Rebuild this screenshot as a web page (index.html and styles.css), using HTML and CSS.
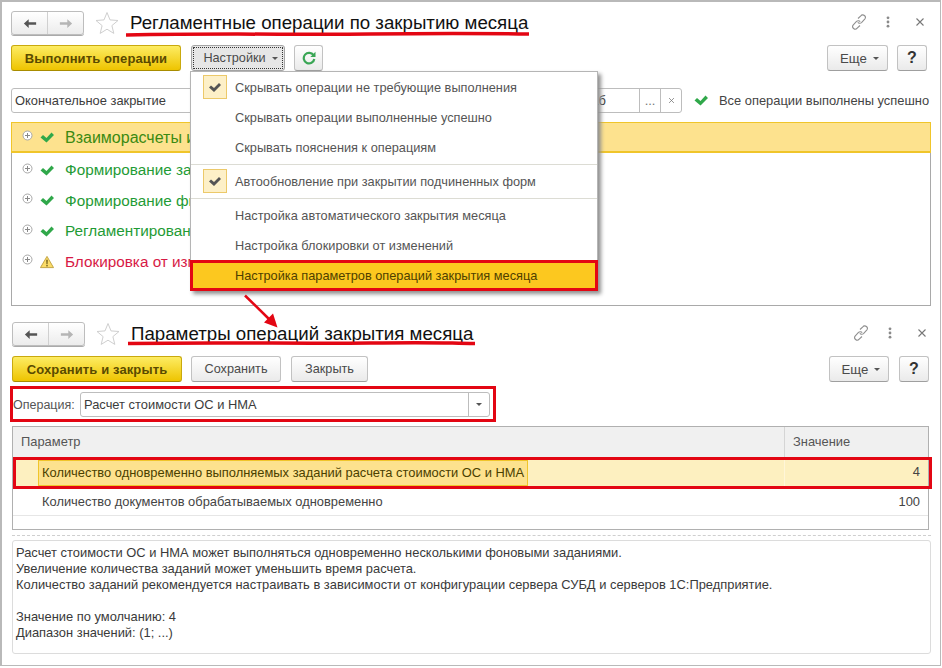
FILE: index.html
```html
<!DOCTYPE html>
<html lang="ru">
<head>
<meta charset="utf-8">
<title>Регламентные операции</title>
<link rel="stylesheet" href="styles.css">
</head>
<body>
<svg class="defs" width="0" height="0">
  <symbol id="i-back" viewBox="0 0 16 12"><path d="M1 6 6.500 1v3.500H15v3H6.500V11z"/></symbol>
  <symbol id="i-fwd" viewBox="0 0 16 12"><path d="M15 6 9.500 1v3.500H1v3h8.500V11z"/></symbol>
  <symbol id="i-star" viewBox="0 0 24 24"><path d="M12 1.500l3 7.400 8 .6-6.100 5.100 1.900 7.800L12 18.200l-6.800 4.200 1.900-7.800L1 9.500l8-.6z" fill="#fff" stroke="#cfcfcf"/></symbol>
  <symbol id="i-link" viewBox="0 0 16 16"><g fill="none" stroke="#8f8f8f" stroke-width="1.100"><path d="M7 4.500 9.800 1.800a2.500 2.500 0 0 1 3.900 3.300L10.500 8.600a2.500 2.500 0 0 1-3.700-.3"/><path d="M9 11.500 6.200 14.200a2.500 2.500 0 0 1-3.900-3.300L5.500 7.400a2.500 2.500 0 0 1 3.700.3"/></g></symbol>
  <symbol id="i-dots" viewBox="0 0 4 12"><g fill="#8a8a8a"><circle cx="2" cy="1.800" r="1.400"/><circle cx="2" cy="6" r="1.400"/><circle cx="2" cy="10.200" r="1.400"/></g></symbol>
  <symbol id="i-x" viewBox="0 0 10 10"><path d="M1.500 1.500l7 7M8.500 1.500l-7 7" stroke="#777" stroke-width="1.100" fill="none"/></symbol>
  <symbol id="i-check" viewBox="0 0 14 11"><path d="M.5 5.500 3 3l3.500 3L11.500 .5 14 3 6.500 10.500z" fill="#30a84a"/></symbol>
  <symbol id="i-mark" viewBox="0 0 14 11"><path d="M1 5.500 3 3.500l3 2.500L11 1l2 2-7 7z" fill="#555"/></symbol>
  <symbol id="i-plus" viewBox="0 0 11 11"><circle cx="5.500" cy="5.500" r="4.500" fill="#fff" stroke="#a8a8a8"/><path d="M3 5.500h5M5.500 3v5" stroke="#888"/></symbol>
  <symbol id="i-warn" viewBox="0 0 15 14"><path d="M7.500 1 14.500 13H.5z" fill="#fbdc68" stroke="#bfa040"/><path d="M6.800 4.500h1.400l-.2 5H7z" fill="#5a4a10"/><rect x="6.800" y="10.300" width="1.400" height="1.400" fill="#5a4a10"/></symbol>
  <symbol id="i-refresh" viewBox="0 0 14 14"><path d="M11.500 4.200A5.300 5.300 0 1 0 12.300 8" fill="none" stroke="#3aa655" stroke-width="2.200"/><path d="M13.500 .8v5.200H8.300z" fill="#3aa655"/></symbol>
</svg>

<main class="page">
  <section class="form form-top">
    <header class="head">
      <div class="nav">
        <button class="nav-btn"><svg class="nav-ico dark"><use href="#i-back"/></svg></button>
        <button class="nav-btn"><svg class="nav-ico light"><use href="#i-fwd"/></svg></button>
      </div>
      <svg class="star"><use href="#i-star"/></svg>
      <h1 class="title">Регламентные операции по закрытию месяца</h1>
      <div class="win-tools">
        <svg class="ico-link"><use href="#i-link"/></svg>
        <svg class="ico-dots"><use href="#i-dots"/></svg>
        <svg class="ico-x"><use href="#i-x"/></svg>
      </div>
    </header>
    <div class="toolbar">
      <button class="btn primary run">Выполнить операции</button>
      <button class="btn open">Настройки<i class="caret"></i></button>
      <button class="btn refresh"><svg class="ico-refresh"><use href="#i-refresh"/></svg></button>
      <button class="btn more more-top">Еще<i class="caret"></i></button>
      <button class="btn help">?</button>
    </div>
    <div class="filter">
      <div class="input wide">
        <span class="val">Окончательное закрытие</span>
        <span class="val tail">аб</span>
        <span class="addon">...</span>
        <span class="addon"><svg class="ico-small-x"><use href="#i-x"/></svg></span>
      </div>
      <svg class="ico-check status-ico"><use href="#i-check"/></svg>
      <span class="status">Все операции выполнены успешно</span>
    </div>
    <div class="list">
      <div class="row current big"><svg class="ico-plus"><use href="#i-plus"/></svg><svg class="ico-check"><use href="#i-check"/></svg><span class="ok">Взаиморасчеты и расчеты</span></div>
      <div class="row"><svg class="ico-plus"><use href="#i-plus"/></svg><svg class="ico-check"><use href="#i-check"/></svg><span class="ok">Формирование записей</span></div>
      <div class="row"><svg class="ico-plus"><use href="#i-plus"/></svg><svg class="ico-check"><use href="#i-check"/></svg><span class="ok">Формирование финансового результата</span></div>
      <div class="row"><svg class="ico-plus"><use href="#i-plus"/></svg><svg class="ico-check"><use href="#i-check"/></svg><span class="ok">Регламентированные операции</span></div>
      <div class="row"><svg class="ico-plus"><use href="#i-plus"/></svg><svg class="ico-warn"><use href="#i-warn"/></svg><span class="bad">Блокировка от изменений</span></div>
    </div>
  </section>

  <section class="form form-bottom">
    <header class="head">
      <div class="nav">
        <button class="nav-btn"><svg class="nav-ico dark"><use href="#i-back"/></svg></button>
        <button class="nav-btn"><svg class="nav-ico light"><use href="#i-fwd"/></svg></button>
      </div>
      <svg class="star"><use href="#i-star"/></svg>
      <h1 class="title">Параметры операций закрытия месяца</h1>
      <div class="win-tools">
        <svg class="ico-link"><use href="#i-link"/></svg>
        <svg class="ico-dots"><use href="#i-dots"/></svg>
        <svg class="ico-x"><use href="#i-x"/></svg>
      </div>
    </header>
    <div class="toolbar">
      <button class="btn primary save-close">Сохранить и закрыть</button>
      <button class="btn save">Сохранить</button>
      <button class="btn close">Закрыть</button>
      <button class="btn more more-bottom">Еще<i class="caret"></i></button>
      <button class="btn help">?</button>
    </div>
    <div class="op-row">
      <label class="op-label">Операция:</label>
      <div class="input combo"><span class="val">Расчет стоимости ОС и НМА</span><span class="addon drop"><i class="caret"></i></span></div>
    </div>
    <div class="table">
      <div class="thead"><div class="col-a">Параметр</div><div class="col-b">Значение</div></div>
      <div class="trow selected"><div class="col-a"><span class="cell-active">Количество одновременно выполняемых заданий расчета стоимости ОС и НМА</span></div><div class="col-b num">4</div></div>
      <div class="trow"><div class="col-a"><span class="cell-plain">Количество документов обрабатываемых одновременно</span></div><div class="col-b num">100</div></div>
    </div>
    <div class="splitter"></div>
    <div class="note">
      <p>Расчет стоимости ОС и НМА может выполняться одновременно несколькими фоновыми заданиями.</p>
      <p>Увеличение количества заданий может уменьшить время расчета.</p>
      <p>Количество заданий рекомендуется настраивать в зависимости от конфигурации сервера СУБД и серверов 1С:Предприятие.</p>
      <p class="gap">Значение по умолчанию: 4</p>
      <p>Диапазон значений: (1; ...)</p>
    </div>
  </section>

  <div class="menu">
    <div class="mi"><span class="tick"><svg class="ico-mark"><use href="#i-mark"/></svg></span>Скрывать операции не требующие выполнения</div>
    <div class="mi">Скрывать операции выполненные успешно</div>
    <div class="mi">Скрывать пояснения к операциям</div>
    <div class="msep"></div>
    <div class="mi"><span class="tick"><svg class="ico-mark"><use href="#i-mark"/></svg></span>Автообновление при закрытии подчиненных форм</div>
    <div class="msep"></div>
    <div class="mi">Настройка автоматического закрытия месяца</div>
    <div class="mi">Настройка блокировки от изменений</div>
    <div class="mi hot">Настройка параметров операций закрытия месяца</div>
  </div>

  <div class="mark mark-op"></div>
  <div class="mark mark-row"></div>
  <svg class="annot" width="942" height="668" viewBox="0 0 942 668">
    <path d="M126 35C230 33 300 35 370 34S470 33 529 34" fill="none" stroke="#e30613" stroke-width="3.500"/>
    <path d="M128 343.500C230 342 300 344 370 343S440 343 475 343.500" fill="none" stroke="#e30613" stroke-width="3.500"/>
    <path d="M245 295.500 271 321" fill="none" stroke="#e30613" stroke-width="2.500"/>
    <path d="M277.500 327.500 264 322.500 273 313.500z" fill="#e30613"/>
  </svg>
</main>
</body>
</html>
```
FILE: styles.css
```css
* { box-sizing: border-box; }
html, body { margin: 0; padding: 0; background: #fff; }
body { font-family: "Liberation Sans", Arial, sans-serif; font-size: 12.9px; color: #4a4a4a; }
.defs { position: absolute; }

.page {
  position: relative;
  width: 941px;
  height: 666px;
  border: 1px solid #b9b9b9;
  border-left-width: 2px;
  border-top-width: 2px;
  overflow: hidden;
}
.form { display: flex; flex-direction: column; }
.form-top { height: 304px; padding: 9px 8px 0 9px; }
.form-bottom { padding: 16px 8px 0 10px; }

.head { display: flex; align-items: center; height: 24px; }
.nav {
  display: flex;
  width: 73px;
  height: 24px;
  border: 1px solid #bdbdbd;
  border-radius: 3px;
  background: linear-gradient(#fff, #ececec);
  box-shadow: 0 1px 0 #aaa;
}
.nav-btn { flex: 1; border: 0; background: none; padding: 0; display: flex; align-items: center; justify-content: center; }
.nav-btn + .nav-btn { border-left: 1px solid #d0d0d0; }
.nav-ico { width: 14px; height: 11px; }
.dark { fill: #555; }
.light { fill: #b5b5b5; }
.star { width: 24px; height: 24px; margin-left: 11px; }
.title { margin: 0 0 0 11px; font-size: 18.700px; font-weight: 400; color: #111; line-height: 24px; white-space: nowrap; }
.win-tools { margin-left: auto; display: flex; align-items: center; height: 24px; padding-bottom: 2px; }
.ico-link { width: 16px; height: 16px; margin-right: 19px; }
.ico-dots { width: 4px; height: 12px; margin-right: 25px; }
.ico-x { width: 10px; height: 10px; margin-right: 7px; }
.form-bottom .ico-x { margin-right: 5px; }

.toolbar { display: flex; align-items: stretch; height: 26px; margin-top: 10px; }
.btn {
  border: 1px solid #c2c2c2;
  border-bottom-color: #9f9f9f;
  border-radius: 3px;
  background: linear-gradient(#fff, #eaeaea);
  font: 12.700px "Liberation Sans", Arial, sans-serif;
  color: #4a4a4a;
  padding: 0;
  display: flex;
  align-items: center;
  justify-content: center;
}
.primary {
  border-color: #c9a90e;
  border-bottom-color: #a88c00;
  background: linear-gradient(#fdec63, #eec400);
  font-weight: 700;
  font-size: 13px;
  letter-spacing: .12px;
  color: #5a4a00;
}
.run, .save-close { width: 170px; }
.open {
  width: 94px;
  margin-left: 10px;
  padding-left: 5px;
  background: #e6e6e6;
  border-color: #a5a5a5;
  outline: 1px dotted #333;
  outline-offset: -3px;
}
.refresh { width: 29px; margin-left: 9px; }
.ico-refresh { width: 14px; height: 14px; }
.more { padding-left: 4px; font-size: 13.200px; }
.more-top { margin-left: auto; width: 61px; }
.more-bottom { margin-left: auto; width: 60px; }
.help { width: 30px; margin-left: 9px; margin-right: 5px; font-weight: 700; font-size: 16px; color: #333; }
.form-bottom .help { margin-left: 10px; margin-right: 3px; }
.save { width: 90px; margin-left: 9px; }
.close { width: 77px; margin-left: 10px; }
.caret {
  display: inline-block;
  width: 0;
  height: 0;
  margin-left: 6px;
  border: 3px solid transparent;
  border-top-color: #555;
  border-bottom-width: 0;
}

.filter { display: flex; align-items: center; height: 25px; margin-top: 17px; }
.input {
  display: flex;
  align-items: center;
  height: 25px;
  border: 1px solid #bdbdbd;
  border-radius: 3px;
  background: #fff;
  color: #3c3c3c;
}
.wide { width: 671px; }
.val { padding-left: 3px; white-space: nowrap; }
.tail { margin-left: auto; padding-right: 33px; }
.addon {
  width: 21px;
  height: 100%;
  border-left: 1px solid #bdbdbd;
  display: flex;
  align-items: center;
  justify-content: center;
  color: #777;
}
.ico-small-x { width: 7px; height: 7px; }
.ico-check { width: 14px; height: 11px; }
.status-ico { margin-left: 12px; }
.status { margin-left: 11px; white-space: nowrap; color: #444; }

.list {
  margin-top: 9px;
  height: 184px;
  width: 920px;
  border: 1px solid #a9a9a9;
  border-top: 0;
}
.row {
  display: flex;
  align-items: center;
  height: 30.500px;
  padding-left: 10px;
  font-size: 15.300px;
  white-space: nowrap;
  overflow: hidden;
}
.current {
  height: 31px;
  margin: 0 -1px 2px;
  padding-left: 10px;
  padding-top: 1px;
  background: #fde28e;
  border: 1px solid #f0c52a;
  border-bottom-width: 2px;
}
.big { font-size: 16px; }
.ico-plus { width: 11px; height: 11px; margin-top: -4px; flex: none; }
.row .ico-check, .ico-warn { margin-left: 7px; flex: none; }
.ico-warn { width: 14px; height: 14px; }
.row span { margin-left: 11px; }
.ok { color: #1f9b35; }
.current .ok { color: #3b8a12; }
.bad { color: #d71a45; }

.op-row { display: flex; align-items: center; height: 25px; margin-top: 10px; padding-left: 1px; }
.op-label { width: 67px; font-size: 12.500px; color: #555; }
.combo { width: 410px; }
.combo .val { padding-left: 3px; flex: 1; }
.drop { flex: none; }
.drop .caret { margin: 0; }

.table { margin-top: 9px; height: 104px; width: 917px; border: 1px solid #b0b0b0; }
.thead, .trow { display: flex; }
.thead { height: 30px; background: #f0f0f0; align-items: center; color: #555; }
.thead .col-a { padding-left: 8px; padding-bottom: 2px; border-right: 1px solid #d5d5d5; height: 100%; display: flex; align-items: center; }
.thead .col-b { padding-bottom: 2px; }
.col-a { width: 772px; }
.col-b { padding-left: 8px; }
.trow { height: 30px; align-items: center; color: #444; }
.trow .col-b { flex: 1; }
.num { text-align: right; padding-right: 8px; }
.selected { height: 32px; background: #fdf0c0; }
.selected .col-a { border-right: 1px solid #fff6d8; height: 100%; display: flex; align-items: center; }
.selected .col-b { height: 100%; line-height: 30px; }
.cell-active {
  margin-left: 25px;
  height: 26px;
  padding: 0 3px;
  line-height: 24px;
  background: #fde28e;
  border: 1px solid #f0c52a;
  white-space: nowrap;
  color: #4a4000;
}
.cell-plain { margin-left: 29px; white-space: nowrap; }
.trow:last-child { border-bottom: 1px solid #e6e6e6; height: 27px; padding-bottom: 2px; }

.splitter { margin-top: 5px; width: 919px; border-top: 1px dashed #cfcfcf; }
.note {
  margin-top: 4px;
  height: 114px;
  width: 919px;
  border: 1px solid #dcdcdc;
  border-radius: 3px;
  padding: 4px 0 0 3px;
  color: #3a3a3a;
  line-height: 16px;
}
.note p { margin: 0; }
.note .gap { margin-top: 16px; }

.menu {
  position: absolute;
  left: 188px;
  top: 69px;
  width: 408px;
  height: 220px;
  background: #fff;
  border: 1px solid #b5b5b5;
  box-shadow: 3px 3px 4px #8f8f8f;
  display: flex;
  flex-direction: column;
  color: #555;
  font-size: 12.750px;
}
.mi { position: relative; height: 30px; line-height: 30px; padding: 1px 0 0 44px; white-space: nowrap; flex: none; }
.msep { height: 1px; margin: 2px 0 1px; background: #dcdcd4; flex: none; }
.tick {
  position: absolute;
  left: 12px;
  top: 3px;
  width: 24px;
  height: 24px;
  background: #fdf0c8;
  border: 1px solid #ecc96a;
  display: flex;
  align-items: center;
  justify-content: center;
}
.ico-mark { width: 14px; height: 11px; }
.hot {
  margin: 0 -1px;
  height: 31px;
  padding: 0 0 0 42px;
  line-height: 25px;
  background: #fcc81f;
  border: 3px solid #e30613;
  color: #4f3f00;
}

.mark { position: absolute; border: 3px solid #e30613; }
.mark-op { left: 8px; top: 384px; width: 486px; height: 36px; }
.mark-row { left: 11px; top: 455px; width: 919px; height: 32px; }
.annot { position: absolute; left: -2px; top: -2px; pointer-events: none; }
```
